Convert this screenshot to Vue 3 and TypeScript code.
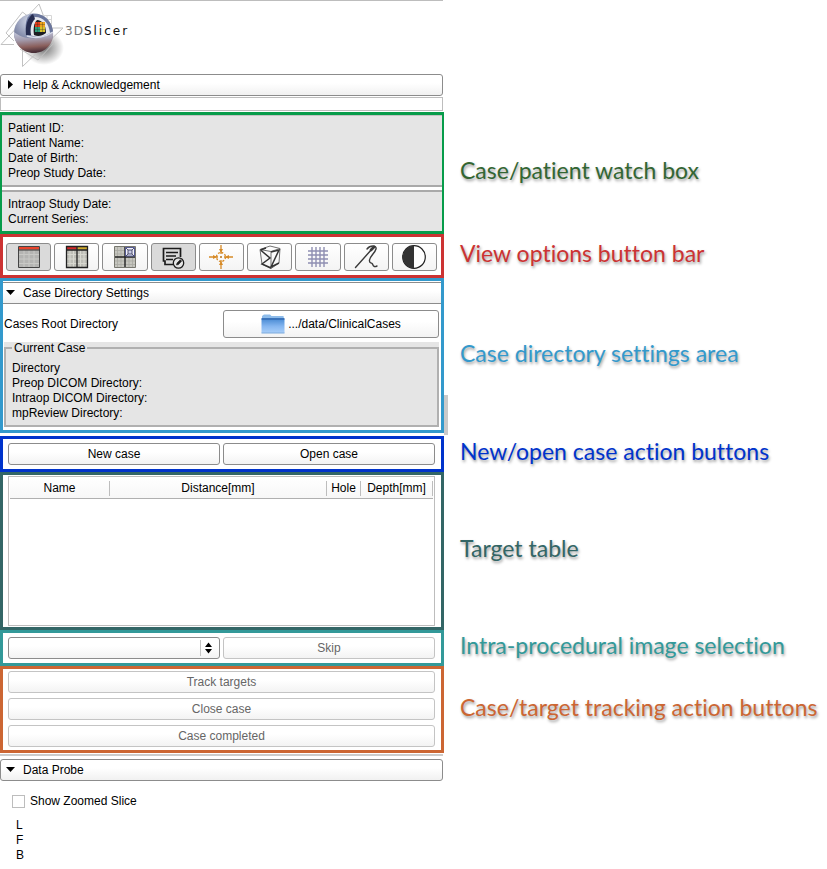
<script setup lang="ts">
import { ref } from 'vue'

interface ViewOption {
  id: string
  label: string
}

const viewOptions: ViewOption[] = [
  { id: 'red', label: 'Red slice layout' },
  { id: 'side', label: 'Side by side layout' },
  { id: 'four', label: 'Four-up layout' },
  { id: 'notes', label: 'Annotations' },
  { id: 'cross', label: 'Crosshair' },
  { id: 'cube', label: 'Z-frame' },
  { id: 'grid', label: 'Grid' },
  { id: 'needle', label: 'Needle' },
  { id: 'contrast', label: 'Window level' },
]
const active = ref<Set<string>>(new Set(['red', 'notes']))

function toggle(id: string): void {
  const next = new Set(active.value)
  if (next.has(id)) next.delete(id)
  else next.add(id)
  active.value = next
}

const patientRows: string[] = ['Patient ID:', 'Patient Name:', 'Date of Birth:', 'Preop Study Date:']
const intraopRows: string[] = ['Intraop Study Date:', 'Current Series:']
const caseRows: string[] = ['Directory', 'Preop DICOM Directory:', 'Intraop DICOM Directory:', 'mpReview Directory:']
const trackingActions: string[] = ['Track targets', 'Close case', 'Case completed']
const axes: string[] = ['L', 'F', 'B']

const helpOpen = ref(false)
const settingsOpen = ref(true)
const probeOpen = ref(true)
const series = ref('')
const zoomed = ref(false)
</script>

<template>
  <main class="page">
    <header class="brand">
      <svg class="logo" viewBox="0 0 64 70" aria-hidden="true">
        <defs>
          <radialGradient id="ball" cx="0.4" cy="0.2" r="0.8">
            <stop offset="0" stop-color="#d4daea" />
            <stop offset="0.5" stop-color="#8890ae" />
            <stop offset="1" stop-color="#4b4a63" />
          </radialGradient>
          <linearGradient id="bowl" x1="0" y1="0" x2="0.15" y2="1">
            <stop offset="0" stop-color="#c3c8dc" />
            <stop offset="0.4" stop-color="#a39cae" />
            <stop offset="0.75" stop-color="#8a5f5c" />
            <stop offset="1" stop-color="#4a3038" />
          </linearGradient>
          <radialGradient id="shade">
            <stop offset="0" stop-color="#000" stop-opacity="0.55" />
            <stop offset="1" stop-color="#000" stop-opacity="0" />
          </radialGradient>
        </defs>
        <ellipse cx="44" cy="47" rx="20" ry="17" fill="url(#shade)" />
        <g fill="none" stroke="#c2c2c2" stroke-width="1">
          <path d="M14 43.500H1L39 3 54 42.500" />
          <path d="M14 40 6 32 22.500 11 30 17" />
          <path d="M22.500 48V65.500L63 27H52" />
          <path d="M20 48 38 59 54 42" />
          <path d="M38 14.500H51.500V29M43 14V20M47 14V24M40 18.500H52M44 22.500H52" stroke="#d6d6d6" />
        </g>
        <circle cx="33.500" cy="32" r="19.500" fill="url(#ball)" />
        <path d="M31 13C43 11 52 19 53 32 47 37 38 38 27 35 24 25 26 16 31 13Z" fill="#6a769c" />
        <path d="M35 16C44 16 49 23 50 32 44 36 37 37 30 34 29 25 31 19 35 16Z" fill="#e6e8ef" />
        <path d="M37 19C42 19 46 24 46 32 42 35 38 36 34 34 33 27 34 22 37 19Z" fill="#1d1d22" />
        <path d="M26 34C25 24 28 16 33 13L35 18C31 22 30 27 31 34Z" fill="#262c50" />
        <path d="M35 21H40V26H35Z" fill="#e23e1c" />
        <path d="M40 21H45V26H40Z" fill="#f0a51d" />
        <path d="M35 26H40V31H35Z" fill="#30a07c" />
        <path d="M40 26H45V31H40Z" fill="#d9c22b" />
        <path d="M37.500 21V31M42.500 21V31M35 23.500H45M35 28.500H45" stroke="#2b2b20" stroke-opacity="0.6" stroke-width="0.500" />
        <path d="M14 31C22 38 40 41 53 31 54 43 45 52 34 52 22 52 14 43 14 31Z" fill="url(#bowl)" />
        <path d="M27 35C36 38 46 36 53 31" fill="none" stroke="#d9dcea" stroke-width="1.500" />
      </svg>
      <p class="wordmark"><span class="wordmark-light">3D</span><span class="wordmark-name">Slicer</span></p>
    </header>

    <div class="plain">
      <button class="section-head boxed" type="button" :aria-expanded="helpOpen" @click="helpOpen = !helpOpen">
        <svg class="arrow" viewBox="0 0 10 10" aria-hidden="true">
          <path :d="helpOpen ? 'M0 2H9L4.500 7Z' : 'M2 0V9L7 4.500Z'" />
        </svg>
        Help &amp; Acknowledgement
      </button>
      <div class="empty-box"></div>
    </div>

    <section class="row">
      <div class="panel green">
        <div class="watch">
          <p v-for="row in patientRows" :key="row">{{ row }}</p>
        </div>
        <div class="watch lower">
          <p v-for="row in intraopRows" :key="row">{{ row }}</p>
        </div>
      </div>
      <h2 class="caption c-green">Case/patient watch box</h2>
    </section>

    <section class="row">
      <div class="panel red">
        <button
          v-for="option in viewOptions"
          :key="option.id"
          class="tool"
          :class="{ active: active.has(option.id) }"
          type="button"
          :aria-label="option.label"
          :aria-pressed="active.has(option.id)"
          @click="toggle(option.id)"
        >
          <svg class="tool-icon" viewBox="0 0 26 26" aria-hidden="true">
            <g v-if="option.id === 'red'">
              <path d="M2.500 2.500H23.500V23.500H2.500Z" fill="#b4b4b2" stroke="#444" />
              <path d="M8 6V23M13 6V23M18 6V23M3 10.500H23M3 15H23M3 19.500H23" stroke="#c9c9c6" />
              <path d="M3 3H23V5.500H3Z" fill="#e8442c" />
              <path d="M2 6H24" stroke="#333" />
            </g>
            <g v-else-if="option.id === 'side'">
              <path d="M2.500 2.500H23.500V23.500H2.500Z" fill="#bdbdb6" />
              <path d="M6 6V23M9.500 6V23M16.500 6V23M20 6V23M3 10.500H23M3 15H23M3 19.500H23" stroke="#d8d8d0" />
              <path d="M3 3H13V5.500H3Z" fill="#d42b2b" />
              <path d="M13 3H23V5.500H13Z" fill="#cda92e" />
              <path d="M2.500 2.500H23.500V23.500H2.500ZM13 3V23M3 6H23" fill="none" stroke="#222" stroke-width="1.300" />
            </g>
            <g v-else-if="option.id === 'four'">
              <path d="M2.500 2.500H23.500V23.500H2.500Z" fill="#c6c6bf" stroke="#77776f" />
              <path d="M5.500 3V23M9 3V23M17 14V23M20.500 14V23M3 6.500H12M3 10H12M3 17H23M3 20.500H23" stroke="#aaa9a2" stroke-width="0.800" />
              <path d="M13 3V23M3 13H23" stroke="#222" stroke-width="1.400" />
              <path d="M13.500 3.500H22.500V12H13.500Z" fill="#f2f2fb" stroke="#555b93" />
              <path d="M16 6H20V10H16ZM14 4 16 6M22 4 20 6M14 12 16 10M22 12 20 10" fill="#c9cbe4" stroke="#3f4263" stroke-width="0.900" />
            </g>
            <g v-else-if="option.id === 'notes'" fill="none" stroke="#1b1b1b">
              <path d="M13 20.500H5V17H3.500V4.500H20.500V13" stroke-width="1.700" />
              <path d="M6 8.500H18M6 12H16M6 15.500H13" stroke-width="1.500" />
              <circle cx="18.500" cy="19" r="5.200" fill="#e4e4e4" stroke-width="1.300" />
              <path d="M16.500 21 17 19 20.300 15.700 21.700 17.100 18.500 20.500Z" fill="#1b1b1b" stroke-width="0.600" />
            </g>
            <g v-else-if="option.id === 'cross'" fill="none" stroke="#d68a27" stroke-width="1.300">
              <circle cx="13" cy="13" r="4.500" stroke-dasharray="2 1.500" />
              <path d="M13 1V10M13 16V25M1 13H10M16 13H25" />
              <path d="M11 5H15L13 9ZM11 21H15L13 17ZM5 11V15L9 13ZM21 11V15L17 13Z" fill="#d68a27" stroke="none" />
              <circle cx="13" cy="13" r="1" fill="#b8741b" stroke="none" />
            </g>
            <g v-else-if="option.id === 'cube'" fill="none" stroke="#343434" stroke-width="1.200">
              <path d="M3 5.500 14 7.500 23 4.500 13 2ZM3 5.500 5 20 14 24.500 14 7.500M23 4.500 22 19 14 24.500" stroke="#707070" stroke-width="1" />
              <path d="M3.500 6 13 14 5 20 14 24M3.500 6 9 4M14 8 22 6 14 23 22 19" stroke-width="1.500" />
            </g>
            <g v-else-if="option.id === 'grid'" fill="none" stroke="#8f8fb2" stroke-width="1.400">
              <path d="M7 3V23M11 3V23M15 3V23M19 3V23M3 7H23M3 11H23M3 15H23M3 19H23" />
            </g>
            <g v-else-if="option.id === 'needle'" fill="none" stroke="#3a3a3a" stroke-linecap="round">
              <path d="M2.500 23.500 19 5" stroke-width="1.400" />
              <path d="M18 6 21 3" stroke-width="2.800" />
              <path d="M14 5C17 1 24 1 23 5 22 9 17 12 16.500 16 16 20 18 18 19.500 20 20.500 23 22 23 24 22" stroke-width="1.400" />
            </g>
            <g v-else>
              <circle cx="13" cy="13" r="11.300" fill="#fff" stroke="#222" stroke-width="1.200" />
              <path d="M13 1.700A11.300 11.300 0 0 0 13 24.300Z" fill="#333" />
            </g>
          </svg>
        </button>
      </div>
      <h2 class="caption c-red">View options button bar</h2>
    </section>

    <section class="row after-gap">
      <div class="panel blue">
        <button class="section-head" type="button" :aria-expanded="settingsOpen" @click="settingsOpen = !settingsOpen">
          <svg class="arrow" viewBox="0 0 10 10" aria-hidden="true">
            <path :d="settingsOpen ? 'M0 2H9L4.500 7Z' : 'M2 0V9L7 4.500Z'" />
          </svg>
          Case Directory Settings
        </button>
        <div v-if="settingsOpen" class="settings">
          <div class="root-dir">
            <label for="root-directory">Cases Root Directory</label>
            <button id="root-directory" class="btn tall" type="button">
              <svg class="folder" viewBox="0 0 24 20" aria-hidden="true">
                <defs>
                  <linearGradient id="folder-front" x1="0" y1="0" x2="0" y2="1">
                    <stop offset="0" stop-color="#4f8fd6" />
                    <stop offset="0.5" stop-color="#85b6f0" />
                    <stop offset="1" stop-color="#a9cff9" />
                  </linearGradient>
                </defs>
                <path d="M1 5V2L3 .500H9L10.500 2H22.500L23 5Z" fill="#8ebcea" />
                <path d="M.500 5.500H23.500V19H.500Z" fill="url(#folder-front)" />
                <path d="M.500 4H23.500V6H.500Z" fill="#3b74bb" />
                <path d="M.500 19H23.500" stroke="#7ba9dc" />
              </svg>
              .../data/ClinicalCases
            </button>
          </div>
          <div class="group-area">
            <fieldset class="group">
              <legend>Current Case</legend>
              <p v-for="row in caseRows" :key="row">{{ row }}</p>
            </fieldset>
          </div>
        </div>
        <span class="sash"></span>
      </div>
      <h2 class="caption c-blue">Case directory settings area</h2>
    </section>

    <section class="row">
      <div class="panel navy pair">
        <button class="btn" type="button">New case</button>
        <button class="btn" type="button">Open case</button>
      </div>
      <h2 class="caption c-navy">New/open case action buttons</h2>
    </section>

    <section class="row">
      <div class="panel pine">
        <div class="table-frame">
          <table class="targets">
            <colgroup>
              <col class="col-name" />
              <col />
              <col class="col-hole" />
              <col class="col-depth" />
            </colgroup>
            <thead>
              <tr>
                <th scope="col"><span>Name</span></th>
                <th scope="col"><span>Distance[mm]</span></th>
                <th scope="col"><span>Hole</span></th>
                <th scope="col"><span>Depth[mm]</span></th>
              </tr>
            </thead>
            <tbody></tbody>
          </table>
        </div>
      </div>
      <h2 class="caption c-pine">Target table</h2>
    </section>

    <section class="row">
      <div class="panel teal pair">
        <div class="select-wrap">
          <select v-model="series" class="btn select" aria-label="Intra-procedural image">
            <option value=""></option>
          </select>
          <svg class="select-arrows" viewBox="0 0 12 16" aria-hidden="true">
            <path d="M.500 0V16" stroke="#c4c4c4" />
            <path d="M5 7 8.500 2.500 12 7ZM5 9 8.500 13.500 12 9Z" />
          </svg>
        </div>
        <button class="btn" type="button" disabled>Skip</button>
      </div>
      <h2 class="caption c-teal">Intra-procedural image selection</h2>
    </section>

    <section class="row">
      <div class="panel orange">
        <button v-for="action in trackingActions" :key="action" class="btn" type="button" disabled>{{ action }}</button>
      </div>
      <h2 class="caption c-orange">Case/target tracking action buttons</h2>
    </section>

    <div class="plain probe">
      <button class="section-head boxed" type="button" :aria-expanded="probeOpen" @click="probeOpen = !probeOpen">
        <svg class="arrow" viewBox="0 0 10 10" aria-hidden="true">
          <path :d="probeOpen ? 'M0 2H9L4.500 7Z' : 'M2 0V9L7 4.500Z'" />
        </svg>
        Data Probe
      </button>
      <div v-if="probeOpen" class="probe-body">
        <label class="check"><input v-model="zoomed" type="checkbox" />Show Zoomed Slice</label>
        <div class="axes">
          <p v-for="axis in axes" :key="axis">{{ axis }}</p>
        </div>
      </div>
    </div>
  </main>
</template>

<style>
body {
  margin: 0;
  background: #fff;
}
</style>

<style scoped>
.page {
  color: #000;
  font: 12px/15px "Liberation Sans", Arial, sans-serif;
}
.page *,
.page *::before {
  box-sizing: border-box;
}
p,
h2 {
  margin: 0;
}
button,
select {
  font: inherit;
  color: inherit;
}
.plain,
.row {
  display: grid;
  grid-template-columns: minmax(0, 444fr) minmax(0, 383fr);
}
.plain > * {
  grid-column: 1;
  margin-right: 1px;
}
.brand {
  display: grid;
  grid-template-columns: 64px 1fr;
  width: 53.6%;
  height: 74px;
  border-top: 1px solid #bdbdbd;
}
.logo {
  width: 64px;
  height: 70px;
}
.wordmark {
  padding: 23px 0 0 1px;
  font: 12px/15px "DejaVu Sans", sans-serif;
  color: #111;
}
.wordmark-light {
  color: #777;
  letter-spacing: 1px;
}
.wordmark-name {
  letter-spacing: 2px;
}

.section-head {
  display: flex;
  align-items: center;
  gap: 7px;
  width: 100%;
  height: 22px;
  padding: 0 6px 0 3px;
  border: 0 solid #8c8c8c;
  border-width: 1px 0;
  background: linear-gradient(#fff 40%, #f1f1f1);
  text-align: left;
}
.section-head.boxed {
  width: auto;
  padding-left: 5px;
  border-width: 1px;
  border-radius: 3px;
}
.arrow {
  width: 10px;
  height: 10px;
}
.empty-box {
  height: 14px;
  margin-top: 1px;
  margin-bottom: 1px;
  border: 1px solid #bdbdbd;
}

.panel {
  border: 3px solid;
}
.green {
  border-color: #079c4a;
  border-width: 3px 2px;
}
.watch {
  padding: 5px 6px 4px;
  border-top: 1px solid #c4c4c4;
  border-bottom: 2px solid #a9a9a9;
  background: #e5e5e5;
}
.watch.lower {
  margin-top: 3px;
  border-top: 2px solid #a9a9a9;
  border-bottom: 0;
}
.red {
  display: flex;
  gap: 3px;
  padding: 6px 4px 4px 3px;
  border-color: #cc3333;
}
.tool {
  display: flex;
  flex: 1;
  align-items: center;
  justify-content: center;
  min-width: 0;
  height: 28px;
  padding: 0;
  border: 1px solid #8c8c8c;
  border-radius: 3px;
  background: linear-gradient(#fff, #f4f4f4);
}
.tool.active {
  background: #dadada;
}
.tool-icon {
  width: 26px;
  height: 26px;
}

.blue {
  position: relative;
  padding-top: 1px;
  border-color: #3399cc;
}
.after-gap {
  margin-bottom: 3px;
}
.settings {
  padding: 6px 2px 3px 1px;
}
.root-dir {
  display: grid;
  grid-template-columns: 1fr 1fr;
  align-items: center;
  gap: 3px;
  margin-bottom: 4px;
}
.group-area {
  background: #e5e5e5;
}
.group {
  margin: 0;
  min-width: 0;
  padding: 7px 6px 4px;
  border: 2px solid #b0b0b0;
}
.group legend {
  padding: 0 2px;
  line-height: 12px;
}
.sash {
  position: absolute;
  right: -7px;
  bottom: -5px;
  width: 4px;
  height: 40px;
  background: #cacaca;
}

.btn {
  display: flex;
  align-items: center;
  justify-content: center;
  gap: 3px;
  width: 100%;
  height: 22px;
  padding: 0 6px;
  border: 1px solid #8c8c8c;
  border-radius: 3px;
  background: linear-gradient(#fff 40%, #f3f3f3);
}
.btn:disabled {
  border-color: #c4c4c4;
  color: #666;
}
.btn.tall {
  height: 28px;
}
.folder {
  width: 24px;
  height: 20px;
}
.pair {
  display: grid;
  grid-template-columns: 1fr 1fr;
  gap: 3px;
  padding: 4px 6px 4px 5px;
}
.navy {
  border-color: #0033cc;
}
.pine {
  padding: 1px 6px 1px 5px;
  border-color: #336666;
}
.table-frame {
  height: 150px;
  padding: 0 1px;
  border: 1px solid #bdbdbd;
}
.targets {
  width: 100%;
  table-layout: fixed;
  border-collapse: collapse;
}
.col-name {
  width: 100px;
}
.col-hole {
  width: 34px;
}
.col-depth {
  width: 72px;
}
.targets th {
  height: 21px;
  padding: 2px 0 0;
  border-bottom: 1px solid #b0b0b0;
  background: linear-gradient(#fff, #f7f7f7);
  font-weight: normal;
}
.targets th span {
  display: block;
  border-right: 1px solid #bdbdbd;
}
.teal {
  border-color: #339999;
}
.select-wrap {
  position: relative;
}
.select {
  appearance: none;
}
.select-arrows {
  position: absolute;
  top: 3px;
  right: 6px;
  width: 16px;
  height: 16px;
  pointer-events: none;
}
.orange {
  display: grid;
  gap: 5px;
  padding: 2px 6px 3px 5px;
  border-color: #cc6633;
}

.caption {
  align-self: center;
  padding: 0 0 6px 16px;
  font: 23px/30px Lato, "Open Sans", sans-serif;
  font-variant-ligatures: none;
  white-space: nowrap;
  text-shadow: 1px 2px 3px rgba(0, 0, 0, 0.4);
}
.c-green { color: #336633; }
.c-red { color: #cc3333; }
.c-blue { color: #3399cc; }
.c-navy { color: #0033cc; }
.c-pine { color: #336666; }
.c-teal { color: #339999; }
.c-orange { color: #cc6633; }

.probe::before {
  content: "";
  height: 2px;
  margin: 1px 1px 3px 0;
  background: #cccccc;
}
.probe-body {
  padding: 13px 12px;
}
.check {
  display: flex;
  align-items: center;
  gap: 5px;
}
.check input {
  appearance: none;
  width: 13px;
  height: 13px;
  margin: 0;
  border: 1px solid #bdbdbd;
  background: #fff;
}
.check input:checked {
  background: #555;
}
.axes {
  padding: 9px 4px 0;
}
</style>
